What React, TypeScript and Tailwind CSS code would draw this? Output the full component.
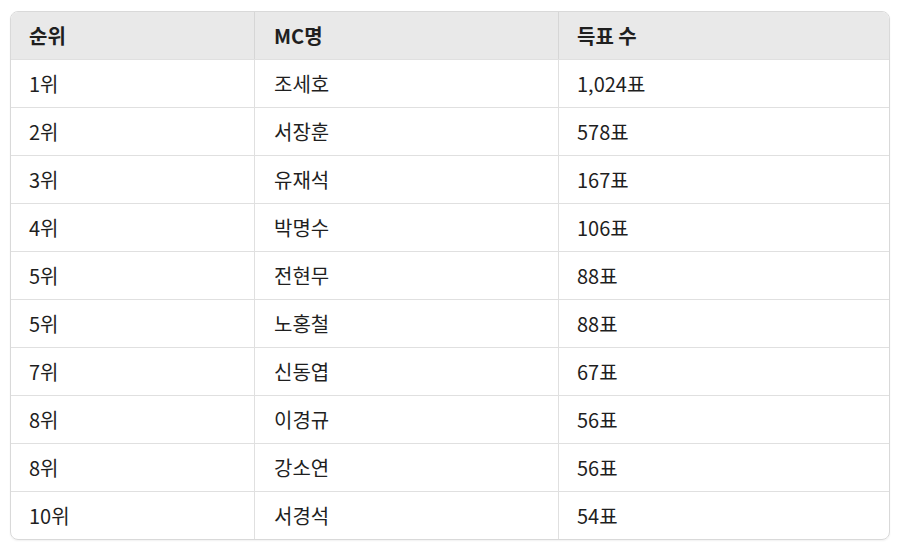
const rows = [
  ["1위", "조세호", "1,024표"],
  ["2위", "서장훈", "578표"],
  ["3위", "유재석", "167표"],
  ["4위", "박명수", "106표"],
  ["5위", "전현무", "88표"],
  ["5위", "노홍철", "88표"],
  ["7위", "신동엽", "67표"],
  ["8위", "이경규", "56표"],
  ["8위", "강소연", "56표"],
  ["10위", "서경석", "54표"],
]

export default function App() {
  return (
    <div
      className="w-[900px] h-[543px] bg-white pt-[11px] px-[10px] text-[#1f1f1f]"
      style={{ fontFamily: '"Noto Sans CJK KR", "Noto Sans", sans-serif' }}
    >
      <div className="rounded-lg border border-[#d9d9d9] overflow-hidden shadow-[0_1px_2px_rgba(0,0,0,0.06)]">
        <div className="grid grid-cols-[244px_304px_1fr] bg-[#e9e9e9] h-[47px] text-[20px] font-bold">
          <div className="flex items-center pl-[18px] border-r border-[#d6d6d6]">순위</div>
          <div className="flex items-center pl-[19px] border-r border-[#d6d6d6]">MC명</div>
          <div className="flex items-center pl-[18px]">득표 수</div>
        </div>
        {rows.map((r, i) => (
          <div
            key={i}
            className="grid grid-cols-[244px_304px_1fr] h-[48px] text-[20px] border-t border-[#e0e0e0]"
          >
            <div className="flex items-center pl-[18px] border-r border-[#e0e0e0]">{r[0]}</div>
            <div className="flex items-center pl-[19px] border-r border-[#e0e0e0]">{r[1]}</div>
            <div className="flex items-center pl-[18px]">{r[2]}</div>
          </div>
        ))}
      </div>
    </div>
  )
}
